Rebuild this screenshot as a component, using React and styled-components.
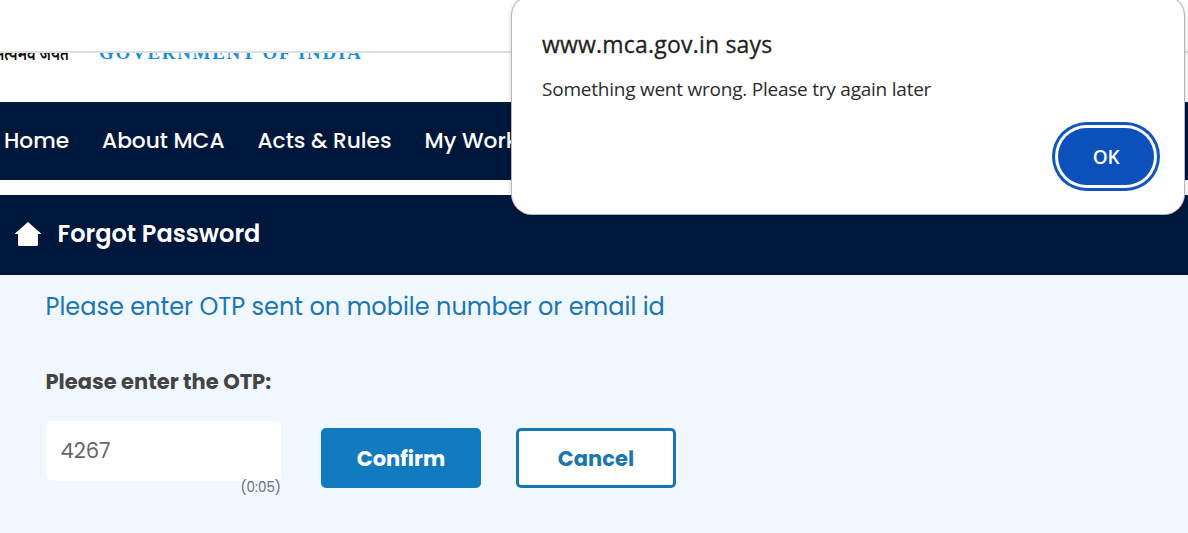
import styled, { createGlobalStyle } from 'styled-components';

const navItems = ['Home', 'About MCA', 'Acts & Rules', 'My Workspace'];

export default function App() {
    return (
        <Page>
            <GlobalStyle />
            <BrowserBar />
            <Masthead>
                <Motto lang="hi">सत्यमेव जयते</Motto>
                <Government>GOVERNMENT OF INDIA</Government>
            </Masthead>
            <NavBar>
                {navItems.map(item => <NavItem key={item}>{item}</NavItem>)}
            </NavBar>
            <TitleBar>
                <HomeIcon viewBox="0 0 26 24">
                    <path d="M13 0 L26 11.5 Q26 12 25 12 H23 V22.5 Q23 24 21.5 24 H4.5 Q3 24 3 22.5 V12 H1 Q0 12 0 11.5 Z" fill="currentColor" />
                </HomeIcon>
                <Title>Forgot Password</Title>
            </TitleBar>
            <Content>
                <Hint>Please enter OTP sent on mobile number or email id</Hint>
                <Label htmlFor="otp">Please enter the OTP:</Label>
                <FormRow>
                    <Field>
                        <OtpInput id="otp" defaultValue="4267" />
                        <Timer>(0:05)</Timer>
                    </Field>
                    <Button $primary>Confirm</Button>
                    <Button>Cancel</Button>
                </FormRow>
            </Content>
            <Dialog role="alertdialog">
                <DialogTitle>www.mca.gov.in says</DialogTitle>
                <DialogText>Something went wrong. Please try again later</DialogText>
                <OkButton>OK</OkButton>
            </Dialog>
        </Page>
    );
}

const GlobalStyle = createGlobalStyle`
    * {
        box-sizing: border-box;
    }

    body {
        margin: 0;
        overflow: hidden;
    }
`

const Page = styled.div`
    position: relative;
    display: flex;
    flex-direction: column;
    height: 533px;
    overflow: hidden;
    background-color: #fff;
    font-family: Poppins, Inter, sans-serif;
    white-space: nowrap;
`

const BrowserBar = styled.div`
    flex: none;
    height: 53px;
    border-bottom: 2px solid #dfdfdf;
`

const Masthead = styled.header`
    flex: none;
    display: flex;
    align-items: flex-start;
    gap: 30px;
    height: 49px;
    overflow: hidden;
`

const Motto = styled.div`
    display: flex;
    justify-content: flex-end;
    width: 69px;
    margin-top: -12px;
    font: 600 19px/24px 'Noto Sans', sans-serif;
    color: #111;
    transform: scaleX(0.78);
    transform-origin: right;
`

const Government = styled.div`
    margin-top: -12px;
    font: 700 19px/24px 'Liberation Serif', serif;
    letter-spacing: 1.7px;
    color: #1f8fdc;
`

const NavBar = styled.nav`
    flex: none;
    display: flex;
    align-items: center;
    gap: 33px;
    height: 78px;
    padding-left: 4px;
    background-color: #00173c;
`

const NavItem = styled.a`
    font-size: 21.7px;
    font-weight: 500;
    line-height: 32px;
    color: #fff;
`

const TitleBar = styled.div`
    flex: none;
    display: flex;
    align-items: center;
    gap: 16.5px;
    height: 80px;
    margin-top: 15px;
    padding-left: 15px;
    background-color: #00173c;
    color: #fff;
`

const HomeIcon = styled.svg`
    width: 26px;
    height: 24px;
    margin-bottom: 2px;
`

const Title = styled.h1`
    margin: 0 0 3px;
    font-size: 24px;
    font-weight: 600;
    line-height: 36px;
`

const Content = styled.main`
    flex: 1;
    display: flex;
    flex-direction: column;
    align-items: flex-start;
    padding: 14px 45.5px 0;
    background-color: #f0f7ff;
`

const Hint = styled.p`
    margin: 0;
    font-size: 24px;
    font-weight: 400;
    line-height: 36px;
    color: #1b75b5;
`

const Label = styled.label`
    margin-top: 41px;
    font-size: 21px;
    font-weight: 700;
    line-height: 32px;
    color: #444;
`

const FormRow = styled.div`
    display: flex;
    gap: 35px;
    margin: 23px 0 0 0.5px;
`

const Field = styled.div`
    display: flex;
    flex-direction: column;
    align-items: flex-end;
    width: 235px;
    margin-right: 5px;
`

const OtpInput = styled.input`
    width: 235px;
    height: 60px;
    padding: 0 14.5px 1px;
    border: none;
    border-radius: 5px;
    background-color: #fff;
    font: 400 21px/32px Poppins, Inter, sans-serif;
    color: #666;
`

const Timer = styled.span`
    margin-top: -3px;
    font-size: 13.5px;
    line-height: 20px;
    color: #666d75;
`

const Button = styled.button`
    width: 160px;
    height: 60px;
    margin-top: 7px;
    padding: 0;
    border: 3px solid ${props => props.$primary ? '#127abf' : '#1b75b1'};
    border-radius: 5px;
    background-color: ${props => props.$primary ? '#127abf' : '#fff'};
    font: inherit;
    font-size: 21px;
    font-weight: 700;
    color: ${props => props.$primary ? '#fff' : '#1b75b1'};
`

/* browser alert, floats over the page and runs past its top edge */
const Dialog = styled.div`
    position: absolute;
    top: -4px;
    left: 512px;
    display: flex;
    flex-direction: column;
    width: 672px;
    height: 218px;
    padding: 32px 30px 26px 30px;
    border-radius: 20px;
    background-color: #fff;
    box-shadow: 0 0 0 1px #b4b9bf, 0 1px 5px rgba(0, 0, 0, 0.3);
    font-family: 'Segoe UI', 'Open Sans', sans-serif;
    color: #1f1f1f;
`

const DialogTitle = styled.h2`
    margin: 0;
    font-size: 23px;
    font-weight: 500;
    line-height: 32px;
    letter-spacing: 0.2px;
    -webkit-text-stroke: 0.3px currentColor;
`

const DialogText = styled.p`
    margin: 15px 0 0;
    font-size: 19px;
    line-height: 28px;
    letter-spacing: -0.23px;
    color: #2c2c2c;
`

const OkButton = styled.button`
    align-self: flex-end;
    width: 96px;
    height: 57px;
    margin-top: 25px;
    padding: 0;
    border: none;
    border-radius: 29px;
    background-color: #0b50bb;
    box-shadow: 0 0 0 3px #fff, 0 0 0 6px #1256bd;
    font: 600 19px/26px 'Segoe UI', 'Open Sans', sans-serif;
    letter-spacing: -0.3px;
    color: #fff;
`
